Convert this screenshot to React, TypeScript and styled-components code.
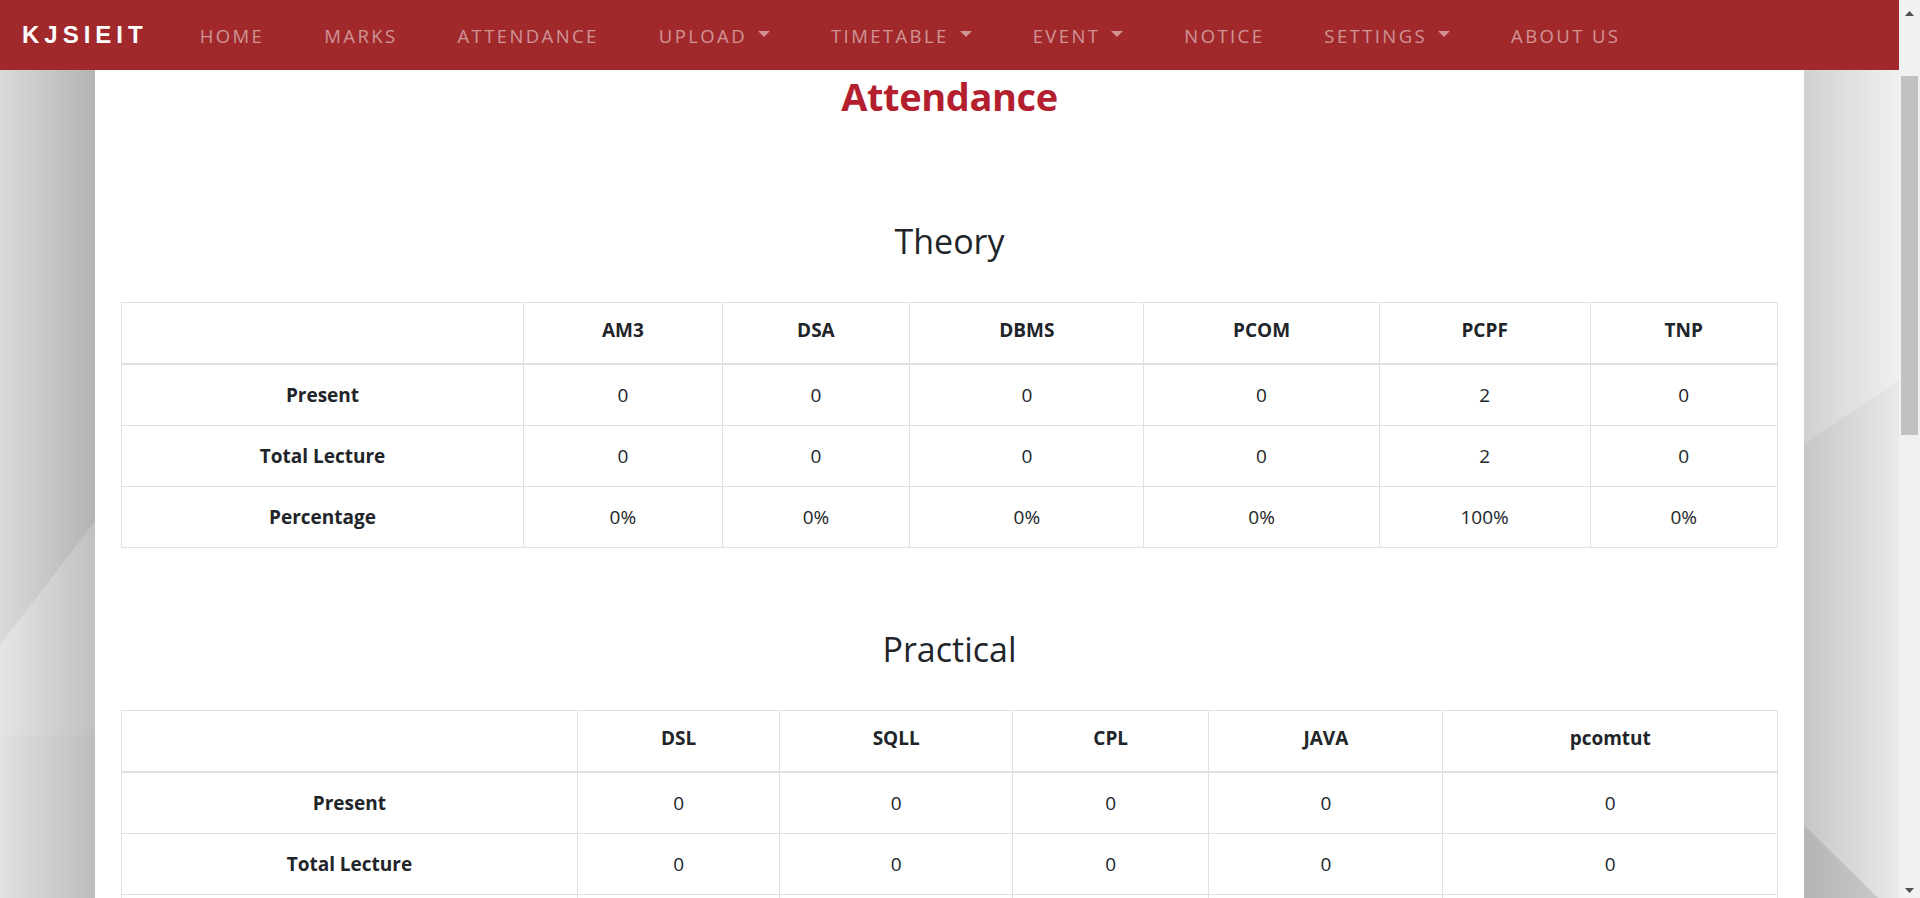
import React from 'react';
import styled, { createGlobalStyle } from 'styled-components';

const GlobalStyle = createGlobalStyle`
  html, body { margin: 0; height: 100%; overflow: hidden; }
  body {
    font-family: "Open Sans", "Noto Sans", sans-serif;
    color: #212529;
    background: #d6d6d6;
  }
  *, *::before, *::after { box-sizing: border-box; }
`;

const Screen = styled.div`
  display: flex;
  height: 100vh;
  overflow: hidden;
`;

const Viewport = styled.div`
  position: relative;
  flex: 1;
  min-width: 0;
  overflow: hidden;
`;

const Backdrop = styled.svg`
  position: absolute;
  inset: 0;
  width: 100%;
  height: 100%;
  display: block;
`;

const Content = styled.div`
  position: relative;
`;

const NavBar = styled.nav`
  height: 70px;
  background: #a1292c;
  display: flex;
  align-items: center;
  padding-left: 22px;
`;

const Brand = styled.a`
  font-family: "Liberation Sans", Arial, sans-serif;
  font-weight: 700;
  font-size: 24px;
  letter-spacing: 5px;
  color: #fff;
  text-decoration: none;
`;

const NavList = styled.ul`
  display: flex;
  align-items: center;
  gap: 60px;
  list-style: none;
  margin: 0 0 0 52px;
  padding: 0;
`;

const NavLink = styled.a`
  display: flex;
  align-items: center;
  font-size: 18.5px;
  letter-spacing: 2.4px;
  color: rgba(255, 255, 255, 0.5);
  text-transform: uppercase;
  text-decoration: none;
  white-space: nowrap;
`;

const Caret = styled.span`
  display: inline-block;
  margin-left: 11px;
  margin-right: 1px;
  margin-top: -2px;
  border-top: 6px solid currentColor;
  border-left: 6px solid transparent;
  border-right: 6px solid transparent;
`;

const Card = styled.main`
  width: 90%;
  margin: 0 auto;
  background: #fff;
  padding: 2px 26px 200px;
`;

const Title = styled.h1`
  margin: 0 0 20px;
  font-size: 38px;
  line-height: 48px;
  font-weight: 700;
  letter-spacing: -0.4px;
  color: #b41f30;
  text-align: center;
`;

const Section = styled.section`
  padding-top: 80px;
`;

const SectionHeading = styled.h3`
  margin: 0 0 40px;
  font-size: 34px;
  line-height: 42px;
  font-weight: 400;
  text-align: center;
  color: #212529;
`;

const Table = styled.table`
  width: 100%;
  table-layout: fixed;
  border-collapse: collapse;
  font-size: 19px;
`;

const Col = styled.col<{ $w: number }>`
  width: ${(p) => p.$w}%;
`;

const HeadCell = styled.th`
  padding: 12px 15px 18px;
  line-height: 30px;
  border: 1px solid #dee2e6;
  border-bottom-width: 2px;
  font-weight: 700;
  text-align: center;
`;

const RowHead = styled.th`
  padding: 15px;
  line-height: 30px;
  border: 1px solid #dee2e6;
  font-weight: 700;
  text-align: center;
`;

const Cell = styled.td`
  padding: 15px;
  line-height: 30px;
  border: 1px solid #dee2e6;
  text-align: center;
`;

const ScrollRail = styled.div`
  width: 21px;
  flex: none;
  display: flex;
  flex-direction: column;
  background: #f1f1f1;
`;

const ScrollButton = styled.div<{ $down?: boolean }>`
  height: 21px;
  flex: none;
  display: flex;
  justify-content: center;
  align-items: ${(p) => (p.$down ? 'flex-end' : 'flex-start')};
  padding: ${(p) => (p.$down ? '0 0 5px' : '11px 0 0')};
`;

const ScrollTrack = styled.div`
  flex: 1;
  padding: 55px 2px 0;
`;

const ScrollThumb = styled.div`
  height: 359px;
  background: #c1c1c1;
`;

type NavItem = { label: string; dropdown?: boolean };

const navItems: NavItem[] = [
  { label: 'Home' },
  { label: 'Marks' },
  { label: 'Attendance' },
  { label: 'Upload', dropdown: true },
  { label: 'Timetable', dropdown: true },
  { label: 'Event', dropdown: true },
  { label: 'Notice' },
  { label: 'Settings', dropdown: true },
  { label: 'About Us' },
];

type TableData = {
  title: string;
  cols: string[];
  widths: number[];
  rows: (string | number)[][];
};

const tables: TableData[] = [
  {
    title: 'Theory',
    cols: ['AM3', 'DSA', 'DBMS', 'PCOM', 'PCPF', 'TNP'],
    widths: [24.28, 11.99, 11.33, 14.14, 14.21, 12.73, 11.32],
    rows: [
      ['Present', 0, 0, 0, 0, 2, 0],
      ['Total Lecture', 0, 0, 0, 0, 2, 0],
      ['Percentage', '0%', '0%', '0%', '0%', '100%', '0%'],
    ],
  },
  {
    title: 'Practical',
    cols: ['DSL', 'SQLL', 'CPL', 'JAVA', 'pcomtut'],
    widths: [27.53, 12.22, 14.06, 11.85, 14.14, 20.2],
    rows: [
      ['Present', 0, 0, 0, 0, 0],
      ['Total Lecture', 0, 0, 0, 0, 0],
      ['Percentage', '0%', '0%', '0%', '0%', '0%'],
    ],
  },
];

function Background() {
  return (
    <Backdrop viewBox="0 0 1899 898" preserveAspectRatio="none" aria-hidden="true">
      <defs>
        <linearGradient id="lTop" gradientUnits="userSpaceOnUse" x1="0" y1="0" x2="96" y2="0">
          <stop offset="0" stopColor="#dadada" />
          <stop offset="1" stopColor="#b3b3b3" />
        </linearGradient>
        <linearGradient id="lMid" gradientUnits="userSpaceOnUse" x1="0" y1="0" x2="96" y2="0">
          <stop offset="0" stopColor="#e5e5e5" />
          <stop offset="1" stopColor="#c0c0c0" />
        </linearGradient>
        <linearGradient id="lBot" gradientUnits="userSpaceOnUse" x1="0" y1="0" x2="96" y2="0">
          <stop offset="0" stopColor="#e1e1e1" />
          <stop offset="1" stopColor="#bcbcbc" />
        </linearGradient>
        <linearGradient id="rTop" gradientUnits="userSpaceOnUse" x1="1802" y1="0" x2="1899" y2="0">
          <stop offset="0" stopColor="#d0d0d0" />
          <stop offset="1" stopColor="#f0f0f0" />
        </linearGradient>
        <linearGradient id="rMid" gradientUnits="userSpaceOnUse" x1="1802" y1="0" x2="1899" y2="0">
          <stop offset="0" stopColor="#c6c6c6" />
          <stop offset="1" stopColor="#e9e9e9" />
        </linearGradient>
        <linearGradient id="rBot" gradientUnits="userSpaceOnUse" x1="1802" y1="0" x2="1899" y2="0">
          <stop offset="0" stopColor="#b4b4b4" />
          <stop offset="1" stopColor="#cdcdcd" />
        </linearGradient>
      </defs>
      <rect x="0" y="0" width="1899" height="898" fill="#dcdcdc" />
      <rect x="0" y="0" width="96" height="898" fill="url(#lTop)" />
      <polygon points="0,645 96,520 96,735 0,735" fill="url(#lMid)" />
      <polygon points="0,735 96,735 96,898 0,898" fill="url(#lBot)" />
      <rect x="1802" y="0" width="97" height="898" fill="url(#rTop)" />
      <polygon points="1802,445 1899,380 1899,898 1802,898" fill="url(#rMid)" />
      <polygon points="1802,823 1878,898 1802,898" fill="url(#rBot)" />
    </Backdrop>
  );
}

function Arrow({ down }: { down?: boolean }) {
  return (
    <svg width="9" height="5" viewBox="0 0 9 5" aria-hidden="true">
      <polygon points={down ? '0,0 9,0 4.5,5' : '0,5 9,5 4.5,0'} fill="#505050" />
    </svg>
  );
}

function AttendanceTable({ data }: { data: TableData }) {
  return (
    <Section>
      <SectionHeading>{data.title}</SectionHeading>
      <Table>
        <colgroup>
          {data.widths.map((w, i) => (
            <Col key={i} $w={w} />
          ))}
        </colgroup>
        <thead>
          <tr>
            <HeadCell />
            {data.cols.map((c) => (
              <HeadCell key={c}>{c}</HeadCell>
            ))}
          </tr>
        </thead>
        <tbody>
          {data.rows.map((row) => (
            <tr key={String(row[0])}>
              <RowHead>{row[0]}</RowHead>
              {row.slice(1).map((v, i) => (
                <Cell key={i}>{v}</Cell>
              ))}
            </tr>
          ))}
        </tbody>
      </Table>
    </Section>
  );
}

export default function App() {
  return (
    <Screen>
      <GlobalStyle />
      <Viewport>
        <Background />
        <Content>
          <NavBar>
            <Brand href="#">KJSIEIT</Brand>
            <NavList>
              {navItems.map((item) => (
                <li key={item.label}>
                  <NavLink href="#">
                    {item.label}
                    {item.dropdown && <Caret />}
                  </NavLink>
                </li>
              ))}
            </NavList>
          </NavBar>
          <Card>
            <Title>Attendance</Title>
            {tables.map((t) => (
              <AttendanceTable key={t.title} data={t} />
            ))}
          </Card>
        </Content>
      </Viewport>
      <ScrollRail aria-hidden="true">
        <ScrollButton>
          <Arrow />
        </ScrollButton>
        <ScrollTrack>
          <ScrollThumb />
        </ScrollTrack>
        <ScrollButton $down>
          <Arrow down />
        </ScrollButton>
      </ScrollRail>
    </Screen>
  );
}
